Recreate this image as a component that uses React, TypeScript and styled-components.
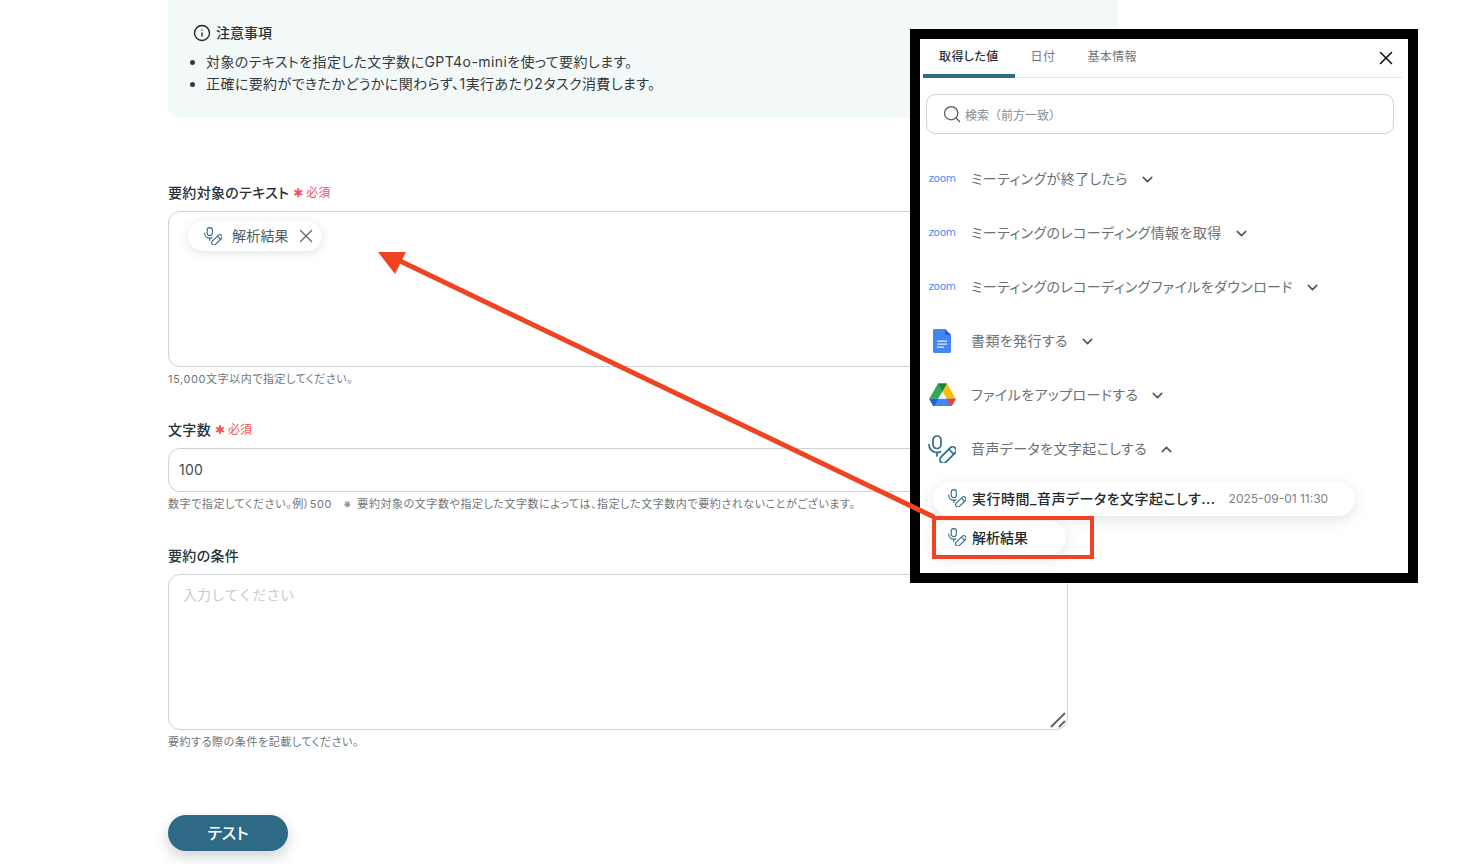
import React from "react";
import styled, { createGlobalStyle } from "styled-components";
import { Search, X, ChevronDown, ChevronUp, Info } from "lucide-react";

const teal = "#2e6a85";

const GlobalStyle = createGlobalStyle`
  html, body {
    margin: 0;
    height: 100%;
    overflow: hidden;
    background: #fff;
  }
  body {
    font-family: "Inter", "Noto Sans CJK JP", sans-serif;
    font-feature-settings: "palt";
    color: #283238;
  }
  * {
    box-sizing: border-box;
  }
`;

const MicPen = ({ size = 18 }: { size?: number }) => (
  <svg width={size} height={size} viewBox="0 0 28 28" fill="none" stroke={teal} strokeWidth="1.7" strokeLinecap="round" strokeLinejoin="round">
    <rect x="5" y="1" width="8" height="12.5" rx="4" />
    <path d="M1 9.5c0 4.8 3.4 8 8 8 1.3 0 2.5-.3 3.5-.8" />
    <path d="M9 17.5v3.5" />
    <rect x="10" y="16.5" width="20" height="7" rx="3.5" transform="rotate(-45 20 20)" />
    <path d="M21.2 14.5l4.6 4.6" />
  </svg>
);

const GoogleDoc = () => (
  <svg width="18" height="24" viewBox="0 0 18 24">
    <path d="M1.5 0H12l6 6v16.5a1.5 1.5 0 0 1-1.5 1.5h-15A1.5 1.5 0 0 1 0 22.5v-21A1.5 1.5 0 0 1 1.5 0z" fill="#4285f4" />
    <path d="M12 0l6 6h-4.5A1.5 1.5 0 0 1 12 4.5z" fill="#2a5fc4" />
    <path d="M4 11.5h10v1.3H4zM4 14.5h10v1.3H4zM4 17.5h7v1.3H4z" fill="#e8f0fe" />
  </svg>
);

const GoogleDrive = () => (
  <svg width="27" height="24" viewBox="0 0 27 24">
    <path d="M9 0.5h9l-4.5 8-4.5 7.2H0.2z" fill="#34a853" />
    <path d="M9 0.5h9l-4.5 8z" fill="#188038" />
    <path d="M18 0.5l8.8 15.2h-9L13.5 8.5z" fill="#fbbc04" />
    <path d="M0.2 15.7h26.6l-3.4 6.2c-.4.7-1.1 1.1-1.9 1.1H5.5c-.8 0-1.5-.4-1.9-1.1z" fill="#4285f4" />
    <path d="M17.8 15.7h9l-3.4 6.2c-.4.7-1.1 1.1-1.9 1.1z" fill="#ea4335" />
    <path d="M0.2 15.7H9L5.5 23c-.8 0-1.5-.4-1.9-1.1z" fill="#1967d2" />
  </svg>
);

const Page = styled.div`
  position: relative;
  width: 1464px;
  height: 864px;
  overflow: hidden;
  padding-left: 168px;
`;

const Notice = styled.section`
  width: 950px;
  height: 128px;
  margin-top: -10px;
  padding: 33px 25px 0;
  background: #f3f9f9;
  border-radius: 12px;
`;

const NoticeTitle = styled.h3`
  display: flex;
  align-items: center;
  gap: 5px;
  margin: 0 0 8px;
  font-size: 14px;
  line-height: 20px;
  font-weight: 500;
  color: #283238;
`;

const NoticeList = styled.ul`
  margin: 0;
  padding-left: 13px;
  font-size: 14px;
  line-height: 22px;
  letter-spacing: 0.41px;
  color: #33393d;
`;

const Form = styled.div`
  width: 900px;
  padding-top: 65px;
`;

const Field = styled.div<{ $gap: number }>`
  margin-bottom: ${(p) => p.$gap}px;
`;

const Label = styled.label`
  display: flex;
  align-items: baseline;
  gap: 4px;
  height: 20px;
  margin-bottom: 8px;
  font-size: 14px;
  line-height: 20px;
  font-weight: 500;
  letter-spacing: 0.33px;
  color: #283238;
`;

const Required = styled.span`
  font-size: 12px;
  font-weight: 400;
  letter-spacing: 0;
  color: #ef5560;
  position: relative;
  top: -1px;
`;

const Star = styled.span`
  font-family: "DejaVu Sans", sans-serif;
  font-size: 12px;
  margin-right: 3px;
`;

const TextBox = styled.div`
  display: flex;
  align-items: flex-start;
  height: 156px;
  padding: 9px 19px;
  border: 1px solid #cdd2d6;
  border-radius: 12px;
  background: #fff;
`;

const Chip = styled.span`
  display: flex;
  align-items: center;
  width: 134px;
  height: 30px;
  padding-left: 16px;
  border-radius: 15px;
  background: #fff;
  box-shadow: 0 2px 10px rgba(40, 60, 70, 0.14);
  font-size: 14px;
  color: #555b60;
`;

const ChipText = styled.span`
  margin: 0 6px 2px 10px;
  letter-spacing: 0.2px;
`;

const Hint = styled.p`
  margin: 4px 0 0;
  font-size: 11px;
  line-height: 16px;
  letter-spacing: 0.57px;
  color: #6f767b;
`;

const NumberInput = styled.input`
  display: block;
  width: 100%;
  height: 44px;
  padding: 0 10px 1px;
  border: 1px solid #cdd2d6;
  border-radius: 12px;
  outline: none;
  font: inherit;
  font-size: 14px;
  letter-spacing: 0.2px;
  color: #444a4f;
`;

const Area = styled.textarea`
  display: block;
  width: 100%;
  height: 156px;
  padding: 9px 14px;
  border: 1px solid #cdd2d6;
  border-radius: 12px;
  outline: none;
  resize: none;
  font: inherit;
  font-size: 14px;
  line-height: 22px;

  &::placeholder {
    color: #c8cccf;
    font-feature-settings: normal;
  }
`;

const AreaWrap = styled.div`
  position: relative;
`;

const ResizeGrip = styled.svg`
  position: absolute;
  right: 1px;
  bottom: 1px;
`;

const TestButton = styled.button`
  display: block;
  width: 120px;
  height: 36px;
  margin-top: 65px;
  padding: 0 0 2px;
  border: 0;
  border-radius: 18px;
  background: ${teal};
  box-shadow: 0 6px 14px rgba(40, 60, 70, 0.22);
  color: #fff;
  font: inherit;
  font-size: 16px;
  font-weight: 500;
`;

const Popup = styled.aside`
  position: absolute;
  left: 910px;
  top: 29px;
  width: 508px;
  height: 554px;
  border: 10px solid #000;
  background: #fff;
  padding: 0 6px 0 3px;
`;

const TabBar = styled.div`
  position: relative;
  display: flex;
  height: 39px;
  border-bottom: 1px solid #e4e7e9;
`;

const Tab = styled.div<{ $active?: boolean }>`
  padding: 0 16px;
  height: 39px;
  line-height: 36px;
  font-size: 12px;
  font-weight: ${(p) => (p.$active ? 500 : 400)};
  color: ${(p) => (p.$active ? "#283238" : "#70767b")};
  border-bottom: 4px solid ${(p) => (p.$active ? teal : "transparent")};
  border-radius: 4px 4px 0 0;
  letter-spacing: 0.4px;
`;

const CloseBtn = styled.span`
  position: absolute;
  right: 5px;
  top: 8px;
  display: flex;
  color: #111;
`;

const SearchBox = styled.div`
  display: flex;
  align-items: center;
  gap: 3px;
  width: 468px;
  height: 40px;
  margin: 16px 0 18px 3px;
  padding-left: 15px;
  border: 1px solid #cdd2d6;
  border-radius: 9px;
  font-size: 12px;
  font-feature-settings: normal;
  color: #868c90;
`;

const Row = styled.div`
  display: flex;
  align-items: center;
  height: 54px;
`;

const RowIcon = styled.span`
  display: flex;
  justify-content: center;
  align-items: center;
  width: 38px;
  margin-right: 10px;
  flex: none;
`;

const Zoom = styled.span`
  font-family: "DejaVu Sans", sans-serif;
  font-size: 10.5px;
  letter-spacing: -0.4px;
  color: #4a8cff;
  padding-bottom: 2px;
`;

const RowText = styled.span`
  font-size: 14px;
  letter-spacing: 0.4px;
  color: #6a7074;
  margin-right: 11px;
  padding-bottom: 2px;
`;

const Pill = styled.div<{ $width: number }>`
  display: flex;
  align-items: center;
  gap: 6px;
  width: ${(p) => p.$width}px;
  height: 34px;
  margin-left: 10px;
  padding: 0 0 2px 15px;
  border-radius: 17px;
  background: #fff;
  box-shadow: 0 4px 14px rgba(40, 60, 70, 0.13);
  font-size: 14px;
  font-weight: 500;
  color: #22292e;
`;

const PillLong = styled.span`
  letter-spacing: 0.5px;
`;

const PillList = styled.div`
  display: flex;
  flex-direction: column;
  gap: 5px;
  margin-top: 6px;
`;

const PillDate = styled.span`
  margin-left: 7px;
  font-size: 12px;
  font-weight: 400;
  color: #7d8387;
`;

const Highlight = styled.div`
  position: absolute;
  left: 932px;
  top: 516px;
  width: 162px;
  height: 43px;
  border: 4px solid #ee4423;
`;

const Arrow = styled.svg`
  position: absolute;
  left: 0;
  top: 0;
  pointer-events: none;
`;

const zoomSteps = [
  "ミーティングが終了したら",
  "ミーティングのレコーディング情報を取得",
  "ミーティングのレコーディングファイルをダウンロード",
];

export default function App() {
  return (
    <Page>
      <GlobalStyle />
      <Notice>
        <NoticeTitle>
          <Info size={18} color="#222" strokeWidth={1.8} />
          注意事項
        </NoticeTitle>
        <NoticeList>
          <li>対象のテキストを指定した文字数にGPT4o-miniを使って要約します。</li>
          <li>正確に要約ができたかどうかに関わらず、1実行あたり2タスク消費します。</li>
        </NoticeList>
      </Notice>

      <Form>
        <Field $gap={33}>
          <Label>
            要約対象のテキスト
            <Required>
              <Star>✱</Star>必須
            </Required>
          </Label>
          <TextBox>
            <Chip>
              <MicPen />
              <ChipText>解析結果</ChipText>
              <X size={22} color="#666" strokeWidth={1.4} />
            </Chip>
          </TextBox>
          <Hint>15,000文字以内で指定してください。</Hint>
        </Field>
        <Field $gap={34}>
          <Label>
            文字数
            <Required>
              <Star>✱</Star>必須
            </Required>
          </Label>
          <NumberInput readOnly value="100" />
          <Hint>数字で指定してください。例）500　※{"\u2002"}要約対象の文字数や指定した文字数によっては、指定した文字数内で要約されないことがございます。</Hint>
        </Field>
        <Field $gap={0}>
          <Label>要約の条件</Label>
          <AreaWrap>
            <Area placeholder="入力してください" readOnly />
            <ResizeGrip width="18" height="18" viewBox="0 0 18 18" stroke="#666" strokeWidth="2">
              <path d="M2 16L16 2M10 16l6-6" />
            </ResizeGrip>
          </AreaWrap>
          <Hint>要約する際の条件を記載してください。</Hint>
        </Field>
        <TestButton>テスト</TestButton>
      </Form>

      <Popup>
        <TabBar>
          <Tab $active>取得した値</Tab>
          <Tab>日付</Tab>
          <Tab>基本情報</Tab>
          <CloseBtn>
            <X size={22} strokeWidth={1.7} />
          </CloseBtn>
        </TabBar>
        <SearchBox>
          <Search size={20} color="#555" strokeWidth={1.5} />
          検索（前方一致）
        </SearchBox>
        {zoomSteps.map((step) => (
          <Row key={step}>
            <RowIcon>
              <Zoom>zoom</Zoom>
            </RowIcon>
            <RowText>{step}</RowText>
            <ChevronDown size={17} color="#555" strokeWidth={2.2} />
          </Row>
        ))}
        <Row>
          <RowIcon>
            <GoogleDoc />
          </RowIcon>
          <RowText>書類を発行する</RowText>
          <ChevronDown size={17} color="#555" strokeWidth={2.2} />
        </Row>
        <Row>
          <RowIcon>
            <GoogleDrive />
          </RowIcon>
          <RowText>ファイルをアップロードする</RowText>
          <ChevronDown size={17} color="#555" strokeWidth={2.2} />
        </Row>
        <Row>
          <RowIcon>
            <MicPen size={28} />
          </RowIcon>
          <RowText>音声データを文字起こしする</RowText>
          <ChevronUp size={17} color="#555" strokeWidth={2.2} />
        </Row>
        <PillList>
          <Pill $width={422}>
            <MicPen />
            <PillLong>実行時間_音声データを文字起こしす...</PillLong>
            <PillDate>2025-09-01 11:30</PillDate>
          </Pill>
          <Pill $width={133}>
            <MicPen />
            解析結果
          </Pill>
        </PillList>
      </Popup>

      <Highlight />
      <Arrow width="1464" height="864" viewBox="0 0 1464 864">
        <path d="M934 517L398 260" stroke="#ee4423" strokeWidth="5" fill="none" />
        <path d="M378 252L406 252L395 274z" fill="#ee4423" />
      </Arrow>
    </Page>
  );
}
